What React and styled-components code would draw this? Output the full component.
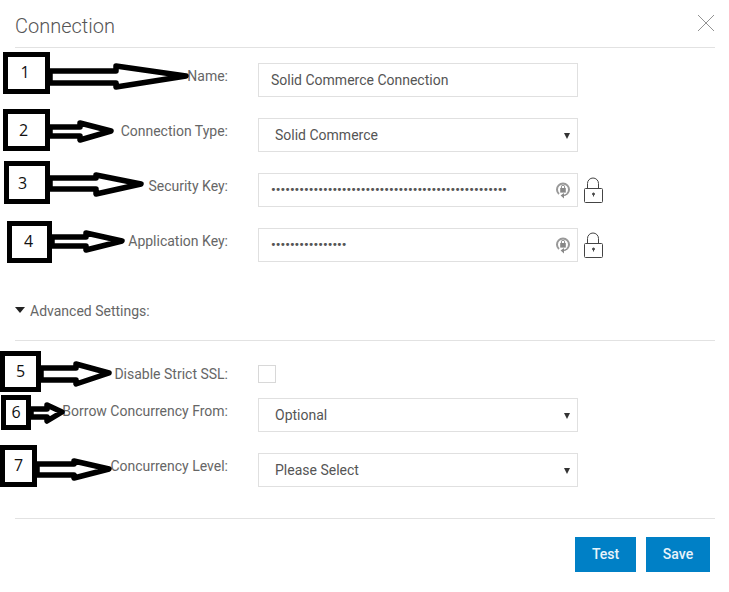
import React from 'react';
import styled, { createGlobalStyle } from 'styled-components';

const GlobalStyle = createGlobalStyle`
  html, body {
    margin: 0;
    padding: 0;
    background: #fff;
  }
  * { box-sizing: border-box; }
`;

const Page = styled.div`
  position: relative;
  width: 729px;
  height: 592px;
  overflow: hidden;
  font-family: Roboto, "Liberation Sans", sans-serif;
  font-size: 14px;
  color: #666;
`;

const Dialog = styled.div`
  width: 700px;
  margin-left: 15px;
`;

const Header = styled.div`
  display: flex;
  align-items: center;
  justify-content: space-between;
  height: 48px;
  border-bottom: 1px solid #e2e2e2;
`;

const Title = styled.h1`
  margin: 0;
  padding-top: 4px;
  font-size: 20px;
  font-weight: 300;
  color: #555;
  line-height: 52px;
`;

const Close = styled.button`
  display: flex;
  padding: 0;
  margin-top: -1px;
  border: 0;
  background: none;
`;

const Fields = styled.div`
  display: flex;
  flex-direction: column;
  gap: ${(p) => p.$gap}px;
  padding-top: ${(p) => p.$top}px;
`;

const Row = styled.div`
  display: flex;
  align-items: flex-start;
  gap: 30px;
`;

const Label = styled.label`
  width: 213px;
  text-align: right;
  line-height: 26px;
  white-space: nowrap;
`;

const Field = styled.div`
  position: relative;
  display: flex;
  align-items: center;
  width: 320px;
  height: 34px;
  padding: 0 12px;
  border: 1px solid #e0e0e0;
  color: #555;
`;

const SelectField = styled(Field)`
  padding-left: 16px;
  &::after {
    content: '';
    position: absolute;
    right: 7px;
    top: 14px;
    border-style: solid;
    border-width: 6px 3px 0;
    border-color: #333 transparent transparent;
  }
`;

const Dots = styled.span`
  font-size: 13px;
  font-weight: 700;
  letter-spacing: 0.05px;
  color: #555;
  transform: translateY(-1px);
`;

const RefreshIcon = styled.svg`
  position: absolute;
  right: 7px;
  top: 8px;
`;

const LockButton = styled.div`
  display: flex;
  margin: 4px 0 0 -24px;
`;

const Advanced = styled.div`
  display: flex;
  align-items: center;
  gap: 5px;
  height: 20px;
  margin-top: 39px;
  line-height: 20px;
`;

const Caret = styled.span`
  width: 0;
  height: 0;
  margin-top: -3px;
  border-style: solid;
  border-width: 6px 5.5px 0;
  border-color: #222 transparent transparent;
`;

const Divider = styled.div`
  height: 1px;
  background: #e2e2e2;
  margin-top: ${(p) => p.$top}px;
`;

const Checkbox = styled.div`
  width: 18px;
  height: 18px;
  border: 1px solid #d8d8d8;
`;

const CheckRow = styled(Row)`
  height: 18px;
  & > label {
    line-height: 18px;
  }
`;

const Footer = styled.div`
  display: flex;
  justify-content: flex-end;
  gap: 10px;
  padding: 18px 5px 0 0;
`;

const Button = styled.button`
  width: ${(p) => p.$width}px;
  height: 35px;
  padding: 0 0 2px;
  border: 0;
  background: #0080c6;
  color: #e8f3fa;
  font-family: Roboto, "Liberation Sans", sans-serif;
  font-size: 14px;
  font-weight: 500;
`;

const NoteBox = styled.div`
  position: absolute;
  left: ${(p) => p.$x}px;
  top: ${(p) => p.$y}px;
  width: ${(p) => p.$w}px;
  height: ${(p) => p.$h}px;
  border: 5px solid #000;
  background: #fff;
  display: flex;
  justify-content: center;
  padding-top: ${(p) => p.$pad}px;
  padding-right: ${(p) => p.$shift}px;
  font-family: "Open Sans", "Noto Sans", sans-serif;
  font-size: 16px;
  line-height: 22px;
  color: #111;
`;

const ArrowLayer = styled.svg`
  position: absolute;
  left: 0;
  top: 0;
`;

const notes = [
  { n: 1, x: 3, y: 52, w: 47, h: 42, pad: 4, shift: 3, from: 50, head: 116, tip: 186, top: 71, bot: 83, hTop: 66, hBot: 87, tipY: 76 },
  { n: 2, x: 3, y: 109, w: 47, h: 42, pad: 5, shift: 6, from: 50, head: 80, tip: 111, top: 127, bot: 136, hTop: 123, hBot: 140, tipY: 131 },
  { n: 3, x: 4, y: 161, w: 46, h: 43, pad: 6, shift: 9, from: 50, head: 96, tip: 141, top: 178, bot: 189, hTop: 175, hBot: 194, tipY: 184 },
  { n: 4, x: 7, y: 221, w: 45, h: 42, pad: 4, shift: 2, from: 52, head: 86, tip: 122, top: 237, bot: 246, hTop: 233, hBot: 250, tipY: 241 },
  { n: 5, x: 0, y: 351, w: 41, h: 41, pad: 4, shift: 0, from: 41, head: 76, tip: 109, top: 368, bot: 380, hTop: 364, hBot: 384, tipY: 373 },
  { n: 6, x: 1, y: 395, w: 30, h: 35, pad: 1, shift: 0, from: 31, head: 47, tip: 62, top: 409, bot: 417, hTop: 405, hBot: 421, tipY: 412 },
  { n: 7, x: 0, y: 445, w: 37, h: 42, pad: 4, shift: 0, from: 37, head: 74, tip: 109, top: 464, bot: 475, hTop: 461, hBot: 478, tipY: 469 },
];

const arrowPoints = (a) =>
  [
    [a.from, a.top],
    [a.head, a.top],
    [a.head, a.hTop],
    [a.tip, a.tipY],
    [a.head, a.hBot],
    [a.head, a.bot],
    [a.from, a.bot],
  ]
    .map((p) => p.join(','))
    .join(' ');

const CloseIcon = () => (
  <svg width="18" height="18" viewBox="0 0 18 18" fill="none" stroke="#777" strokeWidth="0.8">
    <path d="M1 1 L17 17 M17 1 L1 17" />
  </svg>
);

const Refresh = () => (
  <RefreshIcon width="14" height="17" viewBox="0 0 14 17" fill="none">
    <path d="M3 12 A6 6 0 1 1 11 12" stroke="#999" strokeWidth="2" />
    <path d="M11 12 A6 6 0 0 1 7 13.4" stroke="#888" strokeWidth="1.4" />
    <path d="M8 11 L4.6 13.6 L8 16.4 Z" fill="#888" />
    <rect x="4.2" y="6" width="5.6" height="4.6" fill="#888" />
    <path d="M5.4 6 V4.8 A1.6 1.6 0 0 1 8.6 4.8 V6" stroke="#888" strokeWidth="1" />
  </RefreshIcon>
);

const Lock = () => (
  <LockButton>
    <svg width="20" height="26" viewBox="0 0 20 26" fill="none" stroke="#444" strokeWidth="1">
      <rect x="0.5" y="11.5" width="18" height="14" rx="1" />
      <path d="M3.5 11.5 V6.5 A5.5 5.5 0 0 1 14.5 6.5 V11.5" />
      <circle cx="9.5" cy="17" r="1" fill="#444" />
      <path d="M9.5 17.5 V19.5" />
    </svg>
  </LockButton>
);

const App = () => (
  <Page>
    <GlobalStyle />
    <Dialog>
      <Header>
        <Title>Connection</Title>
        <Close aria-label="Close"><CloseIcon /></Close>
      </Header>

      <Fields $gap={21} $top={15}>
        <Row>
          <Label>Name:</Label>
          <Field>Solid Commerce Connection</Field>
        </Row>
        <Row>
          <Label>Connection Type:</Label>
          <SelectField>Solid Commerce</SelectField>
        </Row>
        <Row>
          <Label>Security Key:</Label>
          <Field>
            <Dots>{'•'.repeat(50)}</Dots>
            <Refresh />
          </Field>
          <Lock />
        </Row>
        <Row>
          <Label>Application Key:</Label>
          <Field>
            <Dots>{'•'.repeat(16)}</Dots>
            <Refresh />
          </Field>
          <Lock />
        </Row>
      </Fields>

      <Advanced>
        <Caret />
        Advanced Settings:
      </Advanced>
      <Divider $top={19} />

      <Fields $gap={15} $top={24}>
        <CheckRow>
          <Label>Disable Strict SSL:</Label>
          <Checkbox />
        </CheckRow>
        <Row>
          <Label>Borrow Concurrency From:</Label>
          <SelectField>Optional</SelectField>
        </Row>
      </Fields>
      <Fields $gap={0} $top={21}>
        <Row>
          <Label>Concurrency Level:</Label>
          <SelectField>Please Select</SelectField>
        </Row>
      </Fields>

      <Divider $top={31} />
      <Footer>
        <Button $width={61}>Test</Button>
        <Button $width={64}>Save</Button>
      </Footer>
    </Dialog>

    <ArrowLayer width="729" height="592" fill="#fff" stroke="#000" strokeWidth="5.5" strokeLinejoin="round">
      {notes.map((a) => (
        <polygon key={a.n} points={arrowPoints(a)} />
      ))}
    </ArrowLayer>
    {notes.map((a) => (
      <NoteBox key={a.n} $x={a.x} $y={a.y} $w={a.w} $h={a.h} $pad={a.pad} $shift={a.shift}>
        {a.n}
      </NoteBox>
    ))}
  </Page>
);

export default App;
